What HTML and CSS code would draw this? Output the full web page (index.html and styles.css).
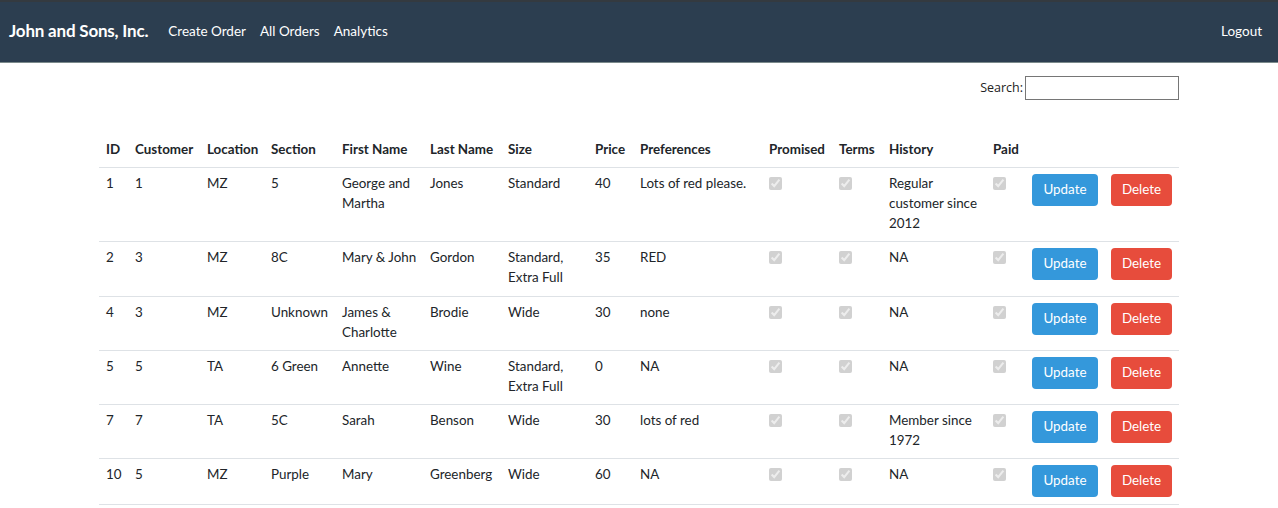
FILE: index.html
```html
<!DOCTYPE html>
<html lang="en">
<head>
<meta charset="utf-8">
<title>All Orders</title>
<link rel="stylesheet" href="styles.css">
</head>
<body>
<nav class="navbar">
  <a class="brand" href="#">John and Sons, Inc.</a>
  <ul class="nav-links">
    <li><a href="#">Create Order</a></li>
    <li><a href="#">All Orders</a></li>
    <li><a href="#">Analytics</a></li>
  </ul>
  <a class="logout" href="#">Logout</a>
</nav>
<main class="container">
  <div class="search-row">
    <label class="search-label">Search:<input class="search-input" type="search"></label>
  </div>
  <table class="orders">
    <colgroup>
      <col class="c-id"><col class="c-cust"><col class="c-loc"><col class="c-sec"><col class="c-first"><col class="c-last"><col class="c-size"><col class="c-price"><col class="c-pref"><col class="c-prom"><col class="c-terms"><col class="c-hist"><col class="c-paid"><col class="c-upd"><col class="c-del">
    </colgroup>
    <thead>
      <tr><th>ID</th><th>Customer</th><th>Location</th><th>Section</th><th>First Name</th><th>Last Name</th><th>Size</th><th>Price</th><th>Preferences</th><th>Promised</th><th>Terms</th><th>History</th><th>Paid</th><th></th><th></th></tr>
    </thead>
    <tbody>
      <tr><td>1</td><td>1</td><td>MZ</td><td>5</td><td>George and Martha</td><td>Jones</td><td>Standard</td><td>40</td><td>Lots of red please.</td><td><input type="checkbox" class="chk" checked disabled></td><td><input type="checkbox" class="chk" checked disabled></td><td>Regular customer since 2012</td><td><input type="checkbox" class="chk" checked disabled></td><td class="act"><button class="btn btn-update">Update</button></td><td class="act"><button class="btn btn-delete">Delete</button></td></tr>
      <tr><td>2</td><td>3</td><td>MZ</td><td>8C</td><td>Mary &amp; John</td><td>Gordon</td><td>Standard, Extra Full</td><td>35</td><td>RED</td><td><input type="checkbox" class="chk" checked disabled></td><td><input type="checkbox" class="chk" checked disabled></td><td>NA</td><td><input type="checkbox" class="chk" checked disabled></td><td class="act"><button class="btn btn-update">Update</button></td><td class="act"><button class="btn btn-delete">Delete</button></td></tr>
      <tr><td>4</td><td>3</td><td>MZ</td><td>Unknown</td><td>James &amp; Charlotte</td><td>Brodie</td><td>Wide</td><td>30</td><td>none</td><td><input type="checkbox" class="chk" checked disabled></td><td><input type="checkbox" class="chk" checked disabled></td><td>NA</td><td><input type="checkbox" class="chk" checked disabled></td><td class="act"><button class="btn btn-update">Update</button></td><td class="act"><button class="btn btn-delete">Delete</button></td></tr>
      <tr><td>5</td><td>5</td><td>TA</td><td>6 Green</td><td>Annette</td><td>Wine</td><td>Standard, Extra Full</td><td>0</td><td>NA</td><td><input type="checkbox" class="chk" checked disabled></td><td><input type="checkbox" class="chk" checked disabled></td><td>NA</td><td><input type="checkbox" class="chk" checked disabled></td><td class="act"><button class="btn btn-update">Update</button></td><td class="act"><button class="btn btn-delete">Delete</button></td></tr>
      <tr><td>7</td><td>7</td><td>TA</td><td>5C</td><td>Sarah</td><td>Benson</td><td>Wide</td><td>30</td><td>lots of red</td><td><input type="checkbox" class="chk" checked disabled></td><td><input type="checkbox" class="chk" checked disabled></td><td>Member since 1972</td><td><input type="checkbox" class="chk" checked disabled></td><td class="act"><button class="btn btn-update">Update</button></td><td class="act"><button class="btn btn-delete">Delete</button></td></tr>
      <tr><td>10</td><td>5</td><td>MZ</td><td>Purple</td><td>Mary</td><td>Greenberg</td><td>Wide</td><td>60</td><td>NA</td><td><input type="checkbox" class="chk" checked disabled></td><td><input type="checkbox" class="chk" checked disabled></td><td>NA</td><td><input type="checkbox" class="chk" checked disabled></td><td class="act"><button class="btn btn-update">Update</button></td><td class="act"><button class="btn btn-delete">Delete</button></td></tr>
    </tbody>
  </table>
</main>
</body>
</html>
```
FILE: styles.css
```css
* { box-sizing: border-box; }
html, body { margin: 0; padding: 0; }
body {
  font-family: Lato, "Liberation Sans", sans-serif;
  font-size: 13.4px;
  line-height: 20px;
  color: #212529;
  background: #fff;
}
.navbar {
  display: flex;
  align-items: center;
  height: 63px;
  background: #2c3e50;
  border-top: 2px solid #343a40;
  border-bottom: 1px solid #7b8a8b;
  padding: 0 16px 2px 9px;
}
.brand {
  color: #fff;
  font-weight: 700;
  font-size: 17px;
  text-decoration: none;
  letter-spacing: -0.2px;
  margin-right: 20px;
}
.nav-links {
  display: flex;
  list-style: none;
  margin: 0;
  padding: 0;
  gap: 14px;
  flex: 1;
}
.nav-links a, .logout {
  color: #fff;
  text-decoration: none;
  font-size: 13.5px;
}
.container {
  width: 1080px;
  margin: 0 0 0 99px;
}
.search-row {
  display: flex;
  justify-content: flex-end;
  padding-top: 13px;
}
.search-label {
  font-family: "Open Sans", "DejaVu Sans", sans-serif;
  font-size: 12.5px;
  color: #222;
  display: flex;
  align-items: center;
}
.search-input {
  margin-left: 2px;
  width: 154px;
  height: 24px;
  border: 1px solid #767676;
  border-radius: 0;
  padding: 1px 2px;
}
.orders {
  width: 1080px;
  table-layout: fixed;
  border-collapse: collapse;
  margin-top: 34px;
}
.orders th, .orders td {
  text-align: left;
  vertical-align: top;
  padding: 5px 4px 8.25px 7px;
}
.orders th { padding-bottom: 8px; }
.orders td.act { padding: 6px 7px 7px 7px; }
.orders th {
  font-weight: 700;
  border-bottom: 1px solid #dee2e6;
}
.orders tbody tr { border-bottom: 1px solid #dee2e6; }
.c-id { width: 29px; }
.c-cust { width: 72px; }
.c-loc { width: 64px; }
.c-sec { width: 71px; }
.c-first { width: 88px; }
.c-last { width: 78px; }
.c-size { width: 87px; }
.c-price { width: 45px; }
.c-pref { width: 129px; }
.c-prom { width: 70px; }
.c-terms { width: 50px; }
.c-hist { width: 104px; }
.c-paid { width: 39px; }
.c-upd { width: 79px; }
.c-del { width: 75px; }
.chk {
  margin: 4px 0 0 0;
  width: 13px;
  height: 13px;
  vertical-align: top;
}
.btn {
  display: block;
  font-family: Lato, "Liberation Sans", sans-serif;
  font-size: 13.4px;
  line-height: 20px;
  color: #fff;
  border: none;
  border-radius: 4px;
  height: 32px;
  padding: 5px 4px 7px;
  cursor: pointer;
}
.btn-update { background: #3498db; width: 66px; }
.btn-delete { background: #e74c3c; width: 61px; }
```
